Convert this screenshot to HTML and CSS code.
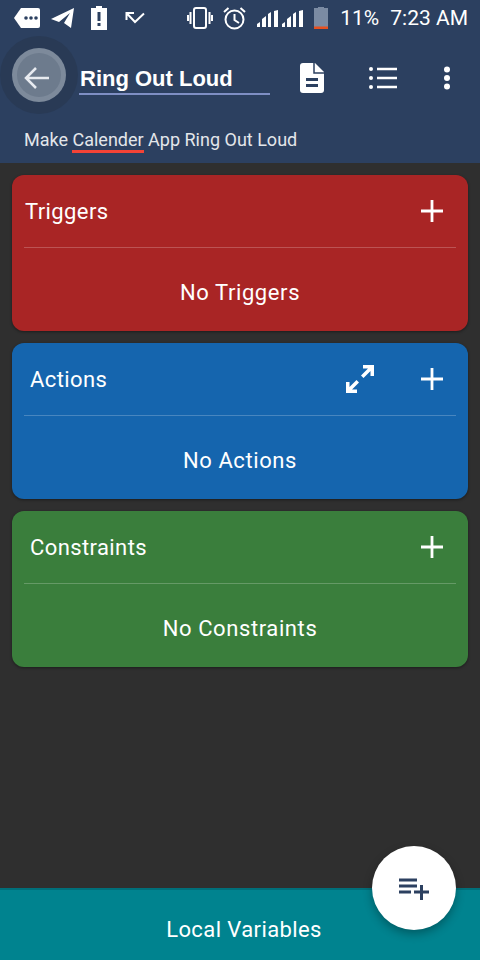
FILE: index.html
```html
<!DOCTYPE html>
<html lang="en">
<head>
<meta charset="utf-8">
<title>Ring Out Loud</title>
<link rel="stylesheet" href="styles.css">
</head>
<body>
<div class="app">
  <header class="header">
    <div class="status">
      <div class="status-left">
        <svg class="ic" width="26" height="20" viewBox="0 0 26 20"><path d="M7 0H24a2 2 0 0 1 2 2V18a2 2 0 0 1-2 2H7L0 10Z" fill="#fff"/><circle cx="12" cy="10" r="1.8" fill="#2c4060"/><circle cx="17" cy="10" r="1.8" fill="#2c4060"/><circle cx="22" cy="10" r="1.8" fill="#2c4060"/></svg>
        <svg class="ic" width="24" height="22" viewBox="0 0 24 22"><path d="M0 12 23 1 20 21 13 16 19 6 8 15Z" fill="#fff"/></svg>
        <svg class="ic bat-alert" width="16" height="24" viewBox="0 0 16 24"><path d="M5 0H11V2H16V24H0V2H5Z" fill="#fff"/><rect x="6.5" y="6" width="3" height="9" fill="#2c4060"/><rect x="6.5" y="17" width="3" height="3" fill="#2c4060"/></svg>
        <svg class="ic tick" width="20" height="12" viewBox="0 0 20 12"><path d="M9 1H1.500V8M1.500 1 10 10 19 1.500" fill="none" stroke="#fff" stroke-width="2"/></svg>
      </div>
      <div class="status-right">
        <svg class="ic vib" width="26" height="22" viewBox="0 0 26 22"><rect x="7" y="1" width="12" height="20" rx="2" fill="none" stroke="#fff" stroke-width="2"/><path d="M3.500 5V17M1 8V14M22.500 5V17M25 8V14" stroke="#fff" stroke-width="2"/></svg>
        <svg class="ic alarm" width="23" height="24" viewBox="0 0 23 24"><circle cx="11.500" cy="13.500" r="9" fill="none" stroke="#fff" stroke-width="2"/><path d="M11.500 8V14L16 17M1 6 5.500 2M22 6 17.500 2" fill="none" stroke="#fff" stroke-width="2"/></svg>
        <svg class="ic sig1" width="21" height="17" viewBox="0 0 21 17"><path d="M0 17V14L3 12V17ZM5 17V9L9 6V17ZM11 17V4L14 2V17ZM17 17V1L21 0V17Z" fill="#fff"/></svg>
        <svg class="ic sig2" width="21" height="17" viewBox="0 0 21 17"><path d="M0 17V14L3 12V17ZM5 17V9L9 6V17ZM11 17V4L14 2V17ZM17 17V1L21 0V17Z" fill="#fff"/></svg>
        <svg class="ic battery" width="14" height="22" viewBox="0 0 14 22"><path d="M4 0H10V1H14V22H0V1H4Z" fill="#7b8ba3"/><rect y="19.500" width="14" height="2.500" fill="#e8501f"/></svg>
        <span class="pct">11%</span>
        <span class="clock">7:23 AM</span>
      </div>
    </div>
    <div class="toolbar">
      <div class="title-field">Ring Out Loud</div>
      <div class="tools">
        <svg width="24" height="30" viewBox="0 0 24 30"><path d="M3 0H15L24 9V27a3 3 0 0 1-3 3H3a3 3 0 0 1-3-3V3a3 3 0 0 1 3-3Z" fill="#fff"/><path d="M14 0V10H24" fill="none" stroke="#2c4060" stroke-width="1.500"/><rect x="6" y="15" width="12" height="3" fill="#2c4060"/><rect x="6" y="21" width="12" height="3" fill="#2c4060"/></svg>
        <svg width="29" height="24" viewBox="0 0 29 24"><circle cx="2" cy="3" r="2" fill="#fff"/><circle cx="2" cy="12" r="2" fill="#fff"/><circle cx="2" cy="21" r="2" fill="#fff"/><path d="M8 3H28M8 12H28M8 21H28" stroke="#fff" stroke-width="2.500"/></svg>
        <svg width="8" height="24" viewBox="0 0 8 24"><circle cx="4" cy="3.500" r="3" fill="#fff"/><circle cx="4" cy="12" r="3" fill="#fff"/><circle cx="4" cy="20.500" r="3" fill="#fff"/></svg>
      </div>
    </div>
    <p class="subtitle">Make <span class="misspelled">Calender</span> App Ring Out Loud</p>
    <div class="back-halo"><div class="back-ring"><div class="back-core">
      <svg width="26" height="24" viewBox="0 0 26 24"><path d="M25 12H3M12 2 2 12 12 22" fill="none" stroke="#e8ebf0" stroke-width="2.500"/></svg>
    </div></div></div>
  </header>

  <main class="cards">
    <section class="card card-red">
      <div class="card-head first">
        <h2>Triggers</h2>
        <svg class="plus" width="22" height="22" viewBox="0 0 22 22"><path d="M11 0V22M0 11H22" stroke="#fff" stroke-width="2.800"/></svg>
      </div>
      <div class="card-body">No Triggers</div>
    </section>
    <section class="card card-blue">
      <div class="card-head">
        <h2>Actions</h2>
        <svg class="expand" width="28" height="28" viewBox="0 0 28 28"><path d="M28 11V0H17V3.500H22L15 10.500 17.500 13 24.500 6V11ZM0 17V28H11V24.500H6L13 17.500 10.500 15 3.500 22V17Z" fill="#fff"/></svg>
        <svg class="plus" width="22" height="22" viewBox="0 0 22 22"><path d="M11 0V22M0 11H22" stroke="#fff" stroke-width="2.800"/></svg>
      </div>
      <div class="card-body">No Actions</div>
    </section>
    <section class="card card-green">
      <div class="card-head">
        <h2>Constraints</h2>
        <svg class="plus" width="22" height="22" viewBox="0 0 22 22"><path d="M11 0V22M0 11H22" stroke="#fff" stroke-width="2.800"/></svg>
      </div>
      <div class="card-body">No Constraints</div>
    </section>
  </main>

  <footer class="footer">Local Variables</footer>
  <button class="fab" aria-label="Add variable">
    <svg width="32" height="22" viewBox="0 0 32 22"><path d="M0 2H18M0 8H18M0 14H12M15 14H30M22.500 7V22" fill="none" stroke="#2c4060" stroke-width="3"/></svg>
  </button>
</div>
</body>
</html>
```
FILE: styles.css
```css
* { box-sizing: border-box; }
html, body { margin: 0; padding: 0; }
body { background: #2f2f2f; font-family: Roboto, "Liberation Sans", sans-serif; color: #fff; }

.app { position: relative; width: 480px; height: 960px; display: flex; flex-direction: column; overflow: hidden; background: #2f2f2f; }

.header { position: relative; height: 163px; flex: none; background: #2c4060; }

.status { height: 36px; display: flex; justify-content: space-between; align-items: center; padding: 0 12px 0 14px; }
.status-left, .status-right { display: flex; align-items: center; }
.status-left { gap: 11px; }
.status-left .bat-alert { margin-left: 5px; }
.status-left .tick { margin-left: 7px; }
.status-right .ic { display: block; }
.status-right .alarm { margin-left: 10px; }
.status-right .sig1 { margin-left: 11px; }
.status-right .sig2 { margin-left: 4px; }
.status-right .battery { margin-left: 11px; }
.pct { font-size: 21px; margin-left: 12px; }
.clock { font-size: 21px; margin-left: 11px; }

.toolbar { height: 72px; display: flex; align-items: center; justify-content: space-between; padding: 12px 0 0 79px; }
.title-field { width: 191px; height: 37px; margin-top: -3px; border-bottom: 2px solid #7f8fc4; font: bold 22px/41px "Liberation Sans", Arial, sans-serif; padding-left: 1px; white-space: nowrap; }
.tools { display: flex; align-items: center; padding-right: 29px; }
.tools svg { display: block; }
.tools svg:nth-child(1) { margin-right: 45px; }
.tools svg:nth-child(2) { margin-right: 45px; }

.subtitle { margin: 0; padding: 20px 0 0 24px; font-size: 18px; line-height: 24px; color: #e3e6ea; white-space: nowrap; }
.misspelled { border-bottom: 3px solid #f44336; display: inline-block; line-height: 20px; }

.back-halo { position: absolute; left: 0; top: 36px; width: 78px; height: 78px; border-radius: 50%; background: #293a55; display: flex; align-items: center; justify-content: center; }
.back-ring { width: 54px; height: 54px; border-radius: 50%; background: #7d8a9b; display: flex; align-items: center; justify-content: center; }
.back-core { width: 44px; height: 44px; border-radius: 50%; background: #6d7b8d; display: flex; align-items: center; justify-content: center; }
.back-core svg { margin: 6px 4px 0 0; }

.cards { flex: 1; display: flex; flex-direction: column; gap: 12px; padding: 12px; }
.card { height: 156px; border-radius: 12px; box-shadow: 0 1px 3px rgba(0,0,0,.4); }
.card-red { background: #a92525; }
.card-blue { background: #1565ae; }
.card-green { background: #3a7e3c; }

.card-head { height: 73px; margin: 0 12px; display: flex; align-items: center; padding: 0 13px 0 6px; border-bottom: 1px solid rgba(255,255,255,.22); }
.card-head.first { padding-left: 1px; }
.card-head h2 { flex: 1; margin: 0; font-size: 22px; font-weight: 400; letter-spacing: .4px; }
.expand { margin-right: 47px; }

.card-body { height: 83px; padding-top: 6px; display: flex; align-items: center; justify-content: center; font-size: 22px; letter-spacing: .6px; }

.footer { height: 72px; flex: none; display: flex; align-items: center; justify-content: center; padding: 8px 0 0 8px; background: #00838f; border-top: 2px solid #006f7a; font-size: 22px; letter-spacing: .4px; }

.fab { position: absolute; left: 372px; top: 846px; width: 84px; height: 84px; padding: 0; border: 0; border-radius: 50%; background: #fff; box-shadow: 0 4px 10px rgba(0,0,0,.3); display: flex; align-items: center; justify-content: center; }
.fab svg { display: block; margin-left: 2px; margin-top: 2px; }
```
